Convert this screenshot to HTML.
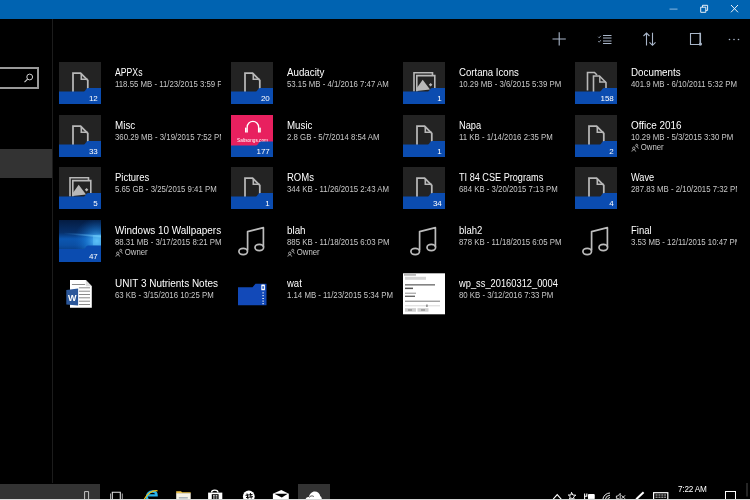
<!DOCTYPE html>
<html><head><meta charset="utf-8"><title>OneDrive</title>
<style>
html,body{margin:0;padding:0;width:750px;height:500px;overflow:hidden;background:#000;font-family:"Liberation Sans",sans-serif;}
.a{position:absolute}
.tl{will-change:transform}
.it{position:absolute;width:106px;height:42px;overflow:hidden;white-space:nowrap;will-change:transform}
.t{position:absolute;left:0;top:5.8px;font-size:10px;line-height:10px;color:#fff;transform:scaleX(0.95);transform-origin:0 0}
.s{position:absolute;left:0;top:17.8px;font-size:8.5px;line-height:9px;color:#c8c8c8;transform:scaleX(0.92);transform-origin:0 0}
.o{position:absolute;left:0;top:28.4px;font-size:8.5px;line-height:9px;color:#c8c8c8;transform:scaleX(0.92);transform-origin:0 0}
</style></head><body>
<!-- title bar -->
<div class="a" style="left:0;top:0;width:750px;height:19px;background:#0063b1"></div>
<svg class="a" style="left:660px;top:0" width="90" height="19" viewBox="0 0 90 19">
 <rect x="9.5" y="8.6" width="8" height="1" fill="#8bb8e0"/>
 <path d="M40.7 7.2 H45.8 V12.3 H40.7 Z M42.5 7.2 V5.3 H47.6 V10.4 H45.8" fill="none" stroke="#e6eef7" stroke-width="1"/>
 <path d="M71 5 L78 12.3 M78 5 L71 12.3" stroke="#f0f4fa" stroke-width="1"/>
</svg>
<!-- sidebar -->
<div class="a" style="left:52px;top:19px;width:1px;height:464px;background:#1c1c1c"></div>
<div class="a" style="left:-3px;top:67px;width:38px;height:17.5px;border:2px solid #999"></div>
<svg class="a" style="left:23px;top:72px" width="12" height="12" viewBox="0 0 12 12"><circle cx="6.7" cy="5" r="2.9" fill="none" stroke="#d0d0d0" stroke-width="1"/><path d="M4.6 7.1 L1.5 10.2" stroke="#d0d0d0" stroke-width="1.1"/></svg>
<div class="a" style="left:0;top:149px;width:52px;height:29px;background:#333"></div>
<!-- command bar -->
<svg class="a" style="left:540px;top:25px" width="210" height="30" viewBox="0 0 210 30">
 <g stroke="#a9b6c9" fill="none" stroke-width="1.1">
  <path d="M19.2 7.3 V20.6 M12.5 14 H25.8"/>
  <path d="M63 10.5 H71.5 M63 13 H71.5 M63 16 H71.5 M63 18.5 H71.5"/>
  <path d="M58.2 11.8 L59.2 12.8 L60.8 10.8 M58.2 16.2 L59.2 17.2 L60.8 15.2" stroke-width="0.8"/>
  <path d="M106.5 20.5 V8 M103.5 11 L106.5 8 L109.5 11 M112.5 7.8 V20.3 M109.5 17.3 L112.5 20.3 L115.5 17.3"/>
  <path d="M150.5 8.5 H160.5 V19.5 H150.5 Z"/>
  <path d="M160 7.5 V20.5"/>
 </g>
 <circle cx="160.5" cy="19" r="1.5" fill="#a9b6c9"/>
 <g fill="#a9b6c9"><circle cx="189.5" cy="14.5" r="0.8"/><circle cx="194" cy="14.5" r="0.8"/><circle cx="198.5" cy="14.5" r="0.8"/></g>
</svg>
<!-- grid -->
<div class="a tl" style="left:59px;top:62px;width:42px;height:42px"><svg width="42" height="42" viewBox="0 0 42 42"><rect width="42" height="42" fill="#232323"/><path d="M14 30 V11.2 H21.6 L28.8 18.4 V27" fill="none" stroke="#b8b8b8" stroke-width="1.75" stroke-linejoin="miter"/><path d="M22.3 11.5 V17.3 H28.6" fill="none" stroke="#b8b8b8" stroke-width="1.6"/><path d="M0 29.6 H24.5 C26.5 29.6 27 26 29 26 H42 V42 H0 Z" fill="#0b4cb0"/><text x="38.8" y="39.2" text-anchor="end" font-size="8" fill="#fff" font-family="Liberation Sans">12</text></svg></div>
<div class="it" style="left:115px;top:62px"><div class="t" style="transform:scaleX(0.867)">APPXs</div><div class="s">118.55 MB - 11/23/2015 3:59 PM</div></div>
<div class="a tl" style="left:231px;top:62px;width:42px;height:42px"><svg width="42" height="42" viewBox="0 0 42 42"><rect width="42" height="42" fill="#232323"/><path d="M14 30 V11.2 H21.6 L28.8 18.4 V27" fill="none" stroke="#b8b8b8" stroke-width="1.75" stroke-linejoin="miter"/><path d="M22.3 11.5 V17.3 H28.6" fill="none" stroke="#b8b8b8" stroke-width="1.6"/><path d="M0 29.6 H24.5 C26.5 29.6 27 26 29 26 H42 V42 H0 Z" fill="#0b4cb0"/><text x="38.8" y="39.2" text-anchor="end" font-size="8" fill="#fff" font-family="Liberation Sans">20</text></svg></div>
<div class="it" style="left:287px;top:62px"><div class="t" style="transform:scaleX(0.976)">Audacity</div><div class="s">53.15 MB - 4/1/2016 7:47 AM</div></div>
<div class="a tl" style="left:403px;top:62px;width:42px;height:42px"><svg width="42" height="42" viewBox="0 0 42 42"><rect width="42" height="42" fill="#232323"/><path d="M11 29.5 V10.8 H29.5 V13.6" fill="none" stroke="#b8b8b8" stroke-width="1.6"/><path d="M13.8 29.5 V13.6 H31.8 V26" fill="none" stroke="#b8b8b8" stroke-width="1.6"/><path d="M13.8 26 L19.7 17.8 L27 27.5 L13.8 29 Z" fill="#b8b8b8"/><path d="M25.8 22.8 L27.6 21 L29.4 22.8 L27.6 24.6 Z" fill="#b8b8b8"/><path d="M0 29.6 H24.5 C26.5 29.6 27 26 29 26 H42 V42 H0 Z" fill="#0b4cb0"/><text x="38.8" y="39.2" text-anchor="end" font-size="8" fill="#fff" font-family="Liberation Sans">1</text></svg></div>
<div class="it" style="left:459px;top:62px"><div class="t" style="transform:scaleX(0.961)">Cortana Icons</div><div class="s">10.29 MB - 3/6/2015 5:39 PM</div></div>
<div class="a tl" style="left:575px;top:62px;width:42px;height:42px"><svg width="42" height="42" viewBox="0 0 42 42"><rect width="42" height="42" fill="#232323"/><path d="M12.5 28.5 V10.5 H19.5 L22 13" fill="none" stroke="#b8b8b8" stroke-width="1.6"/><path d="M18.5 30 V14 H24.5 L31 20.5 V27" fill="none" stroke="#b8b8b8" stroke-width="1.6"/><path d="M24.8 14.3 V20 H30.8" fill="none" stroke="#b8b8b8" stroke-width="1.4"/><path d="M0 29.6 H24.5 C26.5 29.6 27 26 29 26 H42 V42 H0 Z" fill="#0b4cb0"/><text x="38.8" y="39.2" text-anchor="end" font-size="8" fill="#fff" font-family="Liberation Sans">158</text></svg></div>
<div class="it" style="left:631px;top:62px"><div class="t" style="transform:scaleX(0.981)">Documents</div><div class="s">401.9 MB - 6/10/2011 5:32 PM</div></div>
<div class="a tl" style="left:59px;top:114.7px;width:42px;height:42px"><svg width="42" height="42" viewBox="0 0 42 42"><rect width="42" height="42" fill="#232323"/><path d="M14 30 V11.2 H21.6 L28.8 18.4 V27" fill="none" stroke="#b8b8b8" stroke-width="1.75" stroke-linejoin="miter"/><path d="M22.3 11.5 V17.3 H28.6" fill="none" stroke="#b8b8b8" stroke-width="1.6"/><path d="M0 29.6 H24.5 C26.5 29.6 27 26 29 26 H42 V42 H0 Z" fill="#0b4cb0"/><text x="38.8" y="39.2" text-anchor="end" font-size="8" fill="#fff" font-family="Liberation Sans">33</text></svg></div>
<div class="it" style="left:115px;top:114.7px"><div class="t" style="transform:scaleX(0.985)">Misc</div><div class="s">360.29 MB - 3/19/2015 7:52 PM</div></div>
<div class="a tl" style="left:231px;top:114.7px;width:42px;height:42px"><svg width="42" height="42" viewBox="0 0 42 42"><rect width="42" height="42" fill="#e8205f"/><path d="M16.2 17.5 V12 A5.7 5.7 0 0 1 27.6 12 V17.5" fill="none" stroke="#fff" stroke-width="1.3"/><rect x="14" y="12.5" width="1.6" height="5" rx="0.6" fill="#fff"/><rect x="28.2" y="12.5" width="1.6" height="5" rx="0.6" fill="#fff"/><text x="21.5" y="26.5" text-anchor="middle" font-size="5.2" fill="#fff" font-family="Liberation Sans" textLength="31" lengthAdjust="spacingAndGlyphs">Saltsongs.com</text><path d="M0 30.5 H25 C27 30.5 27.8 26.5 30 26.5 H42 V42 H0 Z" fill="#0b4cb0"/><text x="38.8" y="39.2" text-anchor="end" font-size="8" fill="#fff" font-family="Liberation Sans">177</text></svg></div>
<div class="it" style="left:287px;top:114.7px"><div class="t" style="transform:scaleX(0.973)">Music</div><div class="s">2.8 GB - 5/7/2014 8:54 AM</div></div>
<div class="a tl" style="left:403px;top:114.7px;width:42px;height:42px"><svg width="42" height="42" viewBox="0 0 42 42"><rect width="42" height="42" fill="#232323"/><path d="M14 30 V11.2 H21.6 L28.8 18.4 V27" fill="none" stroke="#b8b8b8" stroke-width="1.75" stroke-linejoin="miter"/><path d="M22.3 11.5 V17.3 H28.6" fill="none" stroke="#b8b8b8" stroke-width="1.6"/><path d="M0 29.6 H24.5 C26.5 29.6 27 26 29 26 H42 V42 H0 Z" fill="#0b4cb0"/><text x="38.8" y="39.2" text-anchor="end" font-size="8" fill="#fff" font-family="Liberation Sans">1</text></svg></div>
<div class="it" style="left:459px;top:114.7px"><div class="t" style="transform:scaleX(0.925)">Napa</div><div class="s">11 KB - 1/14/2016 2:35 PM</div></div>
<div class="a tl" style="left:575px;top:114.7px;width:42px;height:42px"><svg width="42" height="42" viewBox="0 0 42 42"><rect width="42" height="42" fill="#232323"/><path d="M14 30 V11.2 H21.6 L28.8 18.4 V27" fill="none" stroke="#b8b8b8" stroke-width="1.75" stroke-linejoin="miter"/><path d="M22.3 11.5 V17.3 H28.6" fill="none" stroke="#b8b8b8" stroke-width="1.6"/><path d="M0 29.6 H24.5 C26.5 29.6 27 26 29 26 H42 V42 H0 Z" fill="#0b4cb0"/><text x="38.8" y="39.2" text-anchor="end" font-size="8" fill="#fff" font-family="Liberation Sans">2</text></svg></div>
<div class="it" style="left:631px;top:114.7px"><div class="t" style="transform:scaleX(0.992)">Office 2016</div><div class="s">10.29 MB - 5/3/2015 3:30 PM</div><div class="o"><svg width="9" height="9" viewBox="0 0 9 9" style="position:absolute;left:0;top:-0.5px"><circle cx="3" cy="5.3" r="1.3" fill="none" stroke="#c8c8c8" stroke-width="0.8"/><path d="M0.9 8.6 C1.2 7.2 2 6.8 3 6.8 C4 6.8 4.8 7.2 5.1 8.6" fill="none" stroke="#c8c8c8" stroke-width="0.8"/><circle cx="6.2" cy="2.4" r="1.1" fill="none" stroke="#c8c8c8" stroke-width="0.8"/><path d="M6.3 3.8 C7.3 4 7.9 4.6 8 5.6" fill="none" stroke="#c8c8c8" stroke-width="0.8"/></svg><span style="margin-left:10.5px">Owner</span></div></div>
<div class="a tl" style="left:59px;top:167.4px;width:42px;height:42px"><svg width="42" height="42" viewBox="0 0 42 42"><rect width="42" height="42" fill="#232323"/><path d="M11 29.5 V10.8 H29.5 V13.6" fill="none" stroke="#b8b8b8" stroke-width="1.6"/><path d="M13.8 29.5 V13.6 H31.8 V26" fill="none" stroke="#b8b8b8" stroke-width="1.6"/><path d="M13.8 26 L19.7 17.8 L27 27.5 L13.8 29 Z" fill="#b8b8b8"/><path d="M25.8 22.8 L27.6 21 L29.4 22.8 L27.6 24.6 Z" fill="#b8b8b8"/><path d="M0 29.6 H24.5 C26.5 29.6 27 26 29 26 H42 V42 H0 Z" fill="#0b4cb0"/><text x="38.8" y="39.2" text-anchor="end" font-size="8" fill="#fff" font-family="Liberation Sans">5</text></svg></div>
<div class="it" style="left:115px;top:167.4px"><div class="t" style="transform:scaleX(0.95)">Pictures</div><div class="s">5.65 GB - 3/25/2015 9:41 PM</div></div>
<div class="a tl" style="left:231px;top:167.4px;width:42px;height:42px"><svg width="42" height="42" viewBox="0 0 42 42"><rect width="42" height="42" fill="#232323"/><path d="M14 30 V11.2 H21.6 L28.8 18.4 V27" fill="none" stroke="#b8b8b8" stroke-width="1.75" stroke-linejoin="miter"/><path d="M22.3 11.5 V17.3 H28.6" fill="none" stroke="#b8b8b8" stroke-width="1.6"/><path d="M0 29.6 H24.5 C26.5 29.6 27 26 29 26 H42 V42 H0 Z" fill="#0b4cb0"/><text x="38.8" y="39.2" text-anchor="end" font-size="8" fill="#fff" font-family="Liberation Sans">1</text></svg></div>
<div class="it" style="left:287px;top:167.4px"><div class="t" style="transform:scaleX(0.95)">ROMs</div><div class="s">344 KB - 11/26/2015 2:43 AM</div></div>
<div class="a tl" style="left:403px;top:167.4px;width:42px;height:42px"><svg width="42" height="42" viewBox="0 0 42 42"><rect width="42" height="42" fill="#232323"/><path d="M14 30 V11.2 H21.6 L28.8 18.4 V27" fill="none" stroke="#b8b8b8" stroke-width="1.75" stroke-linejoin="miter"/><path d="M22.3 11.5 V17.3 H28.6" fill="none" stroke="#b8b8b8" stroke-width="1.6"/><path d="M0 29.6 H24.5 C26.5 29.6 27 26 29 26 H42 V42 H0 Z" fill="#0b4cb0"/><text x="38.8" y="39.2" text-anchor="end" font-size="8" fill="#fff" font-family="Liberation Sans">34</text></svg></div>
<div class="it" style="left:459px;top:167.4px"><div class="t" style="transform:scaleX(0.913)">TI 84 CSE Programs</div><div class="s">684 KB - 3/20/2015 7:13 PM</div></div>
<div class="a tl" style="left:575px;top:167.4px;width:42px;height:42px"><svg width="42" height="42" viewBox="0 0 42 42"><rect width="42" height="42" fill="#232323"/><path d="M14 30 V11.2 H21.6 L28.8 18.4 V27" fill="none" stroke="#b8b8b8" stroke-width="1.75" stroke-linejoin="miter"/><path d="M22.3 11.5 V17.3 H28.6" fill="none" stroke="#b8b8b8" stroke-width="1.6"/><path d="M0 29.6 H24.5 C26.5 29.6 27 26 29 26 H42 V42 H0 Z" fill="#0b4cb0"/><text x="38.8" y="39.2" text-anchor="end" font-size="8" fill="#fff" font-family="Liberation Sans">4</text></svg></div>
<div class="it" style="left:631px;top:167.4px"><div class="t" style="transform:scaleX(0.922)">Wave</div><div class="s">287.83 MB - 2/10/2015 7:32 PM</div></div>
<div class="a tl" style="left:59px;top:220.1px;width:42px;height:42px"><svg width="42" height="42" viewBox="0 0 42 42"><defs><linearGradient id="wg" x1="0" y1="0" x2="0" y2="1"><stop offset="0" stop-color="#041c42"/><stop offset="0.3" stop-color="#07306a"/><stop offset="0.45" stop-color="#0c56b0"/><stop offset="0.6" stop-color="#0b4fa4"/><stop offset="0.75" stop-color="#083b80"/><stop offset="1" stop-color="#083b80"/></linearGradient><radialGradient id="wr" cx="0.9" cy="0.5" r="0.55"><stop offset="0" stop-color="#5cc4ff" stop-opacity="0.95"/><stop offset="0.5" stop-color="#1f86e0" stop-opacity="0.5"/><stop offset="1" stop-color="#0d5ab8" stop-opacity="0"/></radialGradient><linearGradient id="wb" x1="0" y1="0" x2="1" y2="0"><stop offset="0" stop-color="#2f86d8" stop-opacity="0"/><stop offset="1" stop-color="#7fd6ff" stop-opacity="0.8"/></linearGradient></defs><rect width="42" height="42" fill="url(#wg)"/><rect width="42" height="42" fill="url(#wr)"/><path d="M4 12.5 L42 15.5 V17.5 L6 14 Z" fill="url(#wb)"/><path d="M34 15 L42 14.5 V26 L34 25.5 Z" fill="#5fc4f5" opacity="0.5"/><path d="M0 29 H24.5 C26.5 29 27 25.5 29 25.5 H42 V42 H0 Z" fill="#0b4cb0"/><text x="38.8" y="39.2" text-anchor="end" font-size="8" fill="#fff" font-family="Liberation Sans">47</text></svg></div>
<div class="it" style="left:115px;top:220.1px"><div class="t" style="transform:scaleX(0.993)">Windows 10 Wallpapers</div><div class="s">88.31 MB - 3/17/2015 8:21 PM</div><div class="o"><svg width="9" height="9" viewBox="0 0 9 9" style="position:absolute;left:0;top:-0.5px"><circle cx="3" cy="5.3" r="1.3" fill="none" stroke="#c8c8c8" stroke-width="0.8"/><path d="M0.9 8.6 C1.2 7.2 2 6.8 3 6.8 C4 6.8 4.8 7.2 5.1 8.6" fill="none" stroke="#c8c8c8" stroke-width="0.8"/><circle cx="6.2" cy="2.4" r="1.1" fill="none" stroke="#c8c8c8" stroke-width="0.8"/><path d="M6.3 3.8 C7.3 4 7.9 4.6 8 5.6" fill="none" stroke="#c8c8c8" stroke-width="0.8"/></svg><span style="margin-left:10.5px">Owner</span></div></div>
<div class="a tl" style="left:231px;top:220.1px;width:42px;height:42px"><svg width="42" height="42" viewBox="0 0 42 42"><path d="M16.6 30.5 V11.6 L32.4 7.6 V27" fill="none" stroke="#bcbcbc" stroke-width="1.7" stroke-linejoin="round"/><ellipse cx="12.2" cy="31.5" rx="4.3" ry="3.1" fill="none" stroke="#bcbcbc" stroke-width="1.7"/><ellipse cx="28.3" cy="27.5" rx="4.3" ry="3.1" fill="none" stroke="#bcbcbc" stroke-width="1.7"/></svg></div>
<div class="it" style="left:287px;top:220.1px"><div class="t" style="transform:scaleX(0.981)">blah</div><div class="s">885 KB - 11/18/2015 6:03 PM</div><div class="o"><svg width="9" height="9" viewBox="0 0 9 9" style="position:absolute;left:0;top:-0.5px"><circle cx="3" cy="5.3" r="1.3" fill="none" stroke="#c8c8c8" stroke-width="0.8"/><path d="M0.9 8.6 C1.2 7.2 2 6.8 3 6.8 C4 6.8 4.8 7.2 5.1 8.6" fill="none" stroke="#c8c8c8" stroke-width="0.8"/><circle cx="6.2" cy="2.4" r="1.1" fill="none" stroke="#c8c8c8" stroke-width="0.8"/><path d="M6.3 3.8 C7.3 4 7.9 4.6 8 5.6" fill="none" stroke="#c8c8c8" stroke-width="0.8"/></svg><span style="margin-left:10.5px">Owner</span></div></div>
<div class="a tl" style="left:403px;top:220.1px;width:42px;height:42px"><svg width="42" height="42" viewBox="0 0 42 42"><path d="M16.6 30.5 V11.6 L32.4 7.6 V27" fill="none" stroke="#bcbcbc" stroke-width="1.7" stroke-linejoin="round"/><ellipse cx="12.2" cy="31.5" rx="4.3" ry="3.1" fill="none" stroke="#bcbcbc" stroke-width="1.7"/><ellipse cx="28.3" cy="27.5" rx="4.3" ry="3.1" fill="none" stroke="#bcbcbc" stroke-width="1.7"/></svg></div>
<div class="it" style="left:459px;top:220.1px"><div class="t" style="transform:scaleX(0.95)">blah2</div><div class="s">878 KB - 11/18/2015 6:05 PM</div></div>
<div class="a tl" style="left:575px;top:220.1px;width:42px;height:42px"><svg width="42" height="42" viewBox="0 0 42 42"><path d="M16.6 30.5 V11.6 L32.4 7.6 V27" fill="none" stroke="#bcbcbc" stroke-width="1.7" stroke-linejoin="round"/><ellipse cx="12.2" cy="31.5" rx="4.3" ry="3.1" fill="none" stroke="#bcbcbc" stroke-width="1.7"/><ellipse cx="28.3" cy="27.5" rx="4.3" ry="3.1" fill="none" stroke="#bcbcbc" stroke-width="1.7"/></svg></div>
<div class="it" style="left:631px;top:220.1px"><div class="t" style="transform:scaleX(0.95)">Final</div><div class="s">3.53 MB - 12/11/2015 10:47 PM</div></div>
<div class="a tl" style="left:59px;top:272.8px;width:42px;height:42px"><svg width="42" height="42" viewBox="0 0 42 42"><path d="M11 7 H26.8 L32.8 13.2 V34.8 H11 Z" fill="#fff"/><path d="M26.8 7 V13.2 H32.8 Z" fill="#dcdcdc"/><g fill="#8a8a8a"><rect x="12.9" y="11" width="13.2" height="1"/><rect x="19.9" y="14.3" width="11.1" height="1"/><rect x="19.9" y="17.7" width="11.1" height="1"/><rect x="19.9" y="21" width="11.1" height="1"/><rect x="19.9" y="24.3" width="11.1" height="1"/><rect x="19.9" y="27.7" width="11.1" height="1"/><rect x="19.9" y="31" width="11.1" height="1"/></g><path d="M7.3 17 L19.1 15.5 V32.6 L7.3 31.5 Z" fill="#2b579a"/><text x="13.3" y="27.6" text-anchor="middle" font-size="9" font-weight="bold" fill="#fff" font-family="Liberation Sans">W</text></svg></div>
<div class="it" style="left:115px;top:272.8px"><div class="t" style="transform:scaleX(0.998)">UNIT 3 Nutrients Notes</div><div class="s">63 KB - 3/15/2016 10:25 PM</div></div>
<div class="a tl" style="left:231px;top:272.8px;width:42px;height:42px"><svg width="42" height="42" viewBox="0 0 42 42"><path d="M7 14.2 H21.5 L24.5 10.7 H35.5 V32.2 H7 Z" fill="#1249b8"/><rect x="30.3" y="11.4" width="3.6" height="5.8" rx="0.5" fill="#fff"/><rect x="31.4" y="13.2" width="1.4" height="2.6" fill="#1249b8"/><g fill="#fff"><rect x="31.4" y="19.4" width="1.4" height="1"/><rect x="31.4" y="22.2" width="1.4" height="1"/><rect x="31.4" y="25" width="1.4" height="1"/><rect x="31.4" y="27.6" width="1.4" height="1"/><rect x="31.4" y="30.2" width="1.4" height="1"/></g></svg></div>
<div class="it" style="left:287px;top:272.8px"><div class="t" style="transform:scaleX(0.95)">wat</div><div class="s">1.14 MB - 11/23/2015 5:34 PM</div></div>
<div class="a tl" style="left:403px;top:272.8px;width:42px;height:42px"><svg width="42" height="42" viewBox="0 0 42 42"><rect x="0" y="0.3" width="42" height="41" fill="#fff"/><rect x="1" y="1.5" width="12" height="0.9" fill="#777"/><rect x="2" y="3.8" width="21" height="3" fill="#d4d4d4"/><rect x="2" y="11.2" width="30" height="1.3" fill="#666"/><rect x="2" y="14.6" width="8" height="1.5" fill="#555"/><rect x="2" y="19.6" width="11" height="1.3" fill="#aaa"/><rect x="2" y="22.6" width="10" height="1.4" fill="#666"/><rect x="2" y="27.6" width="35" height="1.3" fill="#999"/><rect x="2" y="32" width="35" height="1.4" fill="#e2e2e2"/><rect x="23.5" y="31.5" width="0.9" height="2.5" fill="#444"/><rect x="2" y="35.2" width="11" height="3.5" fill="#d0d0d0"/><rect x="14.5" y="35.2" width="11" height="3.5" fill="#d0d0d0"/><rect x="5" y="36.5" width="4" height="1" fill="#777"/><rect x="18" y="36.5" width="4" height="1" fill="#777"/></svg></div>
<div class="it" style="left:459px;top:272.8px"><div class="t" style="transform:scaleX(0.931)">wp_ss_20160312_0004</div><div class="s">80 KB - 3/12/2016 7:33 PM</div></div>
<!-- taskbar -->
<div class="a" style="left:0;top:483.5px;width:750px;height:16.5px;background:#000"></div>
<div class="a" style="left:0;top:483.5px;width:100px;height:16px;background:#333"></div>
<div class="a" style="left:298px;top:483.5px;width:32px;height:16px;background:#333"></div>
<svg class="a" style="left:0;top:480px" width="750" height="20" viewBox="0 0 750 20">
 <!-- mic -->
 <path d="M84.6 19 V11.6 H88.6 V19" fill="none" stroke="#d8d8d8" stroke-width="0.9"/>
 <!-- task view -->
 <path d="M112.3 19.5 V12.3 H120.3 V19.5" fill="none" stroke="#e0e0e0" stroke-width="1.1"/>
 <path d="M110.5 19.5 V13.5 M122.3 19.5 V13.5" fill="none" stroke="#bbb" stroke-width="0.9"/>
 <!-- IE -->
 <path d="M148 15.3 H156.6 C156.6 12.8 154.8 11.5 152.3 11.5 C149.3 11.5 146.8 14 146.8 17 C146.8 19 148 20.5 150 20.5" fill="none" stroke="#29b6ee" stroke-width="2.3"/>
 <path d="M144.3 19.3 C146.8 13.8 152.5 10 157.6 10.8" fill="none" stroke="#f3c315" stroke-width="1.3"/>
 <!-- explorer -->
 <path d="M176.2 11.2 H181 L182 12.2 H190.7 V13.4 H176.2 Z" fill="#f0c54a"/>
 <rect x="176.2" y="13.2" width="14.5" height="6.8" fill="#f7f3e6"/>
 <rect x="178.8" y="17.3" width="9" height="1.1" fill="#8c9aa6"/>
 <!-- store -->
 <rect x="208.1" y="12.6" width="14.2" height="7.4" fill="#fff"/>
 <path d="M211.5 12.6 C211.5 9.2 218 9.2 218 12.6" fill="none" stroke="#fff" stroke-width="1.3"/>
 <path d="M211.8 14.2 H218.6 V19.4 H211.8 Z" fill="#000"/>
 <path d="M213 15.3 H214.8 V16.6 H213 Z M215.6 15.3 H217.4 V16.6 H215.6 Z M213 17.4 H214.8 V18.6 H213 Z M215.6 17.4 H217.4 V18.6 H215.6 Z" fill="#fff"/>
 <!-- groove/slack -->
 <circle cx="248.8" cy="16.4" r="5.9" fill="#fff"/>
 <path d="M247 13.5 L248 19 M250.3 13 L251.3 18.5 M245.5 15.3 L252.5 14.5 M246 17.5 L253 16.7" stroke="#000" stroke-width="1"/>
 <!-- mail -->
 <path d="M272.9 13.8 L281.3 10 L288.8 13.8 V20 H272.9 Z" fill="#fff"/>
 <path d="M274.3 13.7 H287.8 L281.8 17.4 Z" fill="#000"/>
 <!-- onedrive -->
 <path d="M305.5 20 C305.5 18 307 16.8 308.8 17 C309.5 14 311.8 11.5 314.8 11.5 C317.5 11.5 319.8 13.5 320.3 16.3 C321.5 16.8 322 18.3 321.8 20 Z" fill="#fff"/>
 <path d="M309.2 17.3 C310.5 15.8 312.3 15.5 313.8 16.5" fill="none" stroke="#333" stroke-width="0.9"/>
 <!-- tray -->
 <path d="M553.2 19.2 L557.2 14.6 L561.2 19.2" fill="none" stroke="#fff" stroke-width="1.1"/>
 <path d="M571.5 12.3 L572.8 15 L575.8 15.2 L573.5 17 L574.3 19.8 L571.8 18.2 L569.3 19.5 L570.3 16.8 L568.3 15 L571 15 Z" fill="none" stroke="#fff" stroke-width="1"/>
 <path d="M584.6 13.6 V19.5 M586.8 13.6 V16.3 H584.6" fill="none" stroke="#fff" stroke-width="1.1"/>
 <path d="M588.5 14.5 H594.2 V18.8 H588.5 Z" fill="#fff" stroke="#fff" stroke-width="1"/>
 <path d="M602.8 19.6 A7.3 7.3 0 0 1 610 13 M605.3 19.6 A5 5 0 0 1 610 15.2 M607.6 19.6 A2.6 2.6 0 0 1 610 17.5" fill="none" stroke="#e8e8e8" stroke-width="1"/>
 <path d="M616.4 16 H617.8 L620.2 13.4 V19.8 L617.8 18.4 H616.4 Z" fill="none" stroke="#e8e8e8" stroke-width="0.9"/>
 <path d="M621.6 15.4 L625 18.8 M625 15.4 L621.6 18.8" stroke="#e8e8e8" stroke-width="1"/>
 <path d="M636.2 19.3 L643.6 12.3" stroke="#fff" stroke-width="2"/>
 <rect x="653.6" y="12.7" width="14.2" height="7.3" fill="none" stroke="#fff" stroke-width="1.2"/>
 <path d="M655.5 15 H666 M655.5 17.2 H666" stroke="#fff" stroke-width="0.8" stroke-dasharray="2.1 0.8"/>
 <rect x="725.5" y="11.5" width="10" height="8.5" fill="none" stroke="#fff" stroke-width="1"/>
 <rect x="746.5" y="3" width="1" height="13.5" fill="#4a4a4a"/>
</svg>
<div class="a tl" style="left:678px;top:485.3px;font-size:8.2px;line-height:10px;color:#fff;letter-spacing:-0.2px">7:22 AM</div>
<div class="a" style="left:0;top:499px;width:750px;height:1px;background:#d8d8d8"></div>
</body></html>
